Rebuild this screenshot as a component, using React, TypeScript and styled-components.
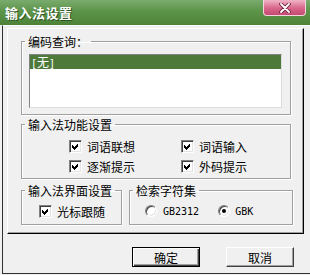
import React from 'react';
import styled, { createGlobalStyle, css } from 'styled-components';

const GlobalStyle = createGlobalStyle`
  html, body {
    margin: 0;
    padding: 0;
    background: #f0f0f0;
  }
  body {
    font-family: "Noto Sans CJK SC", "Noto Sans", sans-serif;
    font-size: 12px;
    color: #000;
  }
  * {
    box-sizing: border-box;
  }
`;

// Window chrome
const Window = styled.div`
  width: 310px;
  height: 275px;
  display: flex;
  flex-direction: column;
  background: #f0f0f0;
  overflow: hidden;
`;

const TitleBar = styled.div`
  height: 25px;
  flex: none;
  display: flex;
  justify-content: space-between;
  align-items: flex-start;
  padding-left: 5px;
  background: linear-gradient(#7aab6e, #5c9449 45%, #4c8339);
`;

const Title = styled.span`
  line-height: 26px;
  font-size: 13px;
  font-weight: bold;
  letter-spacing: 0.5px;
  color: #fff;
  text-shadow: 1px 1px 0 #2f5224;
`;

const CloseButton = styled.div`
  width: 43px;
  height: 16px;
  margin-right: 4px;
  display: flex;
  align-items: center;
  justify-content: center;
  border: 1px solid #f4d4de;
  border-top: none;
  border-radius: 0 0 4px 4px;
  background: linear-gradient(#f0b4c6, #d8658a 55%, #c44a72);
`;

const Body = styled.div`
  flex: 1;
  display: flex;
  flex-direction: column;
  margin: 0 0 1px 2px;
  padding: 2px 6px 0 4px;
  border-top: 1px solid #fff;
  border-left: 1px solid #303030;
  border-bottom: 1px solid #303030;
`;

const Panel = styled.div`
  display: flex;
  flex-direction: column;
  padding: 6px 12px 8px 13px;
  border: 1px solid;
  border-color: #fff #000 #000 #fff;
  box-shadow: inset -1px -1px 0 #a0a0a0;
`;

// Group boxes
const Group = styled.fieldset<{ $width?: number; $top?: number }>`
  margin: ${({ $top }) => $top || 0}px 0 0 0;
  padding: 0;
  min-width: 0;
  border: 1px solid #a0a0a0;
  box-shadow: inset 1px 1px 0 #fff, 1px 1px 0 #fff;
  ${({ $width }) =>
    $width
      ? css`
          width: ${$width}px;
          flex: none;
        `
      : css`
          flex: 1;
        `}
`;

const Caption = styled.legend`
  margin-left: 3px;
  padding: 0 3px;
  line-height: 13px;
  font-size: 12px;
`;

const GroupRow = styled.div`
  display: flex;
  gap: 7px;
  margin-top: 5px;
  margin-right: -2px;
`;

// List
const ListWrap = styled.div`
  padding: 6px 8px 6px 7px;
`;

const ListBox = styled.div`
  height: 54px;
  background: #fff;
  border: 1px solid;
  border-color: #828282 #dcdcdc #dcdcdc #828282;
`;

const ListItem = styled.div<{ $selected?: boolean }>`
  height: 14px;
  line-height: 14px;
  padding-left: 1px;
  background: ${({ $selected }) => ($selected ? '#4d7a3a' : 'transparent')};
  color: ${({ $selected }) => ($selected ? '#fff' : '#000')};
`;

// Options
const OptionGrid = styled.div`
  display: grid;
  grid-template-columns: 112px 112px;
  row-gap: 4px;
  padding: 7px 0 4px 47px;
`;

const OptionLine = styled.div<{ $left: number }>`
  display: flex;
  padding: 6px 0 5px ${({ $left }) => $left}px;
`;

const Option = styled.label<{ $gap?: number; $after?: number }>`
  display: flex;
  align-items: center;
  gap: ${({ $gap }) => $gap || 5}px;
  height: 16px;
  margin-right: ${({ $after }) => $after || 0}px;
  white-space: nowrap;
`;

const Box = styled.span`
  width: 13px;
  height: 13px;
  flex: none;
  display: flex;
  background: #fff;
  border: 1px solid;
  border-color: #808080 #fff #fff #808080;
  box-shadow: inset 1px 1px 0 #404040, inset -1px -1px 0 #e3e3e3;
`;

const Radio = styled.span<{ $checked?: boolean }>`
  width: 12px;
  height: 12px;
  flex: none;
  display: flex;
  align-items: center;
  justify-content: center;
  border-radius: 50%;
  background: #fff;
  border: 1px solid;
  border-color: #808080 #fff #fff #808080;
  box-shadow: inset 1px 1px 0 #404040, inset -1px -1px 0 #e3e3e3;

  &::after {
    content: "";
    width: 4px;
    height: 4px;
    border-radius: 50%;
    background: ${({ $checked }) => ($checked ? '#000' : 'transparent')};
  }
`;

// half-width latin, like the bitmap font of the original
const Latin = styled.span`
  font-family: "DejaVu Sans Mono", "Liberation Mono", monospace;
  font-size: 10px;
`;

// Buttons
const Footer = styled.div`
  display: flex;
  justify-content: flex-end;
  gap: 26px;
  padding: 13px 10px 0 0;
`;

const Button = styled.button<{ $default?: boolean }>`
  width: 68px;
  height: 20px;
  padding: 0;
  font: inherit;
  font-size: 12px;
  color: #000;
  background: #f0f0f0;
  border: 1px solid;
  ${({ $default }) =>
    $default
      ? css`
          border-color: #000;
          box-shadow: inset 1px 1px 0 #fff, inset -1px -1px 0 #404040, inset -2px -2px 0 #a0a0a0;
        `
      : css`
          border-color: #fff #404040 #404040 #fff;
          box-shadow: inset -1px -1px 0 #a0a0a0;
        `}
`;

const Check = () => (
  <svg width="11" height="11" viewBox="0 0 11 11" shapeRendering="crispEdges">
    <polygon points="2,4 4,6 8,2 8,5 4,9 2,7" fill="#000" />
  </svg>
);

const CloseGlyph = () => (
  <svg width="12" height="10" viewBox="0 0 12 10">
    <path d="M2 1 L10 9 M10 1 L2 9" stroke="#6e1f3c" strokeWidth="3.6" strokeLinecap="round" />
    <path d="M2 1 L10 9 M10 1 L2 9" stroke="#fff" strokeWidth="1.8" strokeLinecap="round" />
  </svg>
);

const features = ['词语联想', '词语输入', '逐渐提示', '外码提示'];

const App = () => {
  return (
    <Window>
      <GlobalStyle />
      <TitleBar>
        <Title>输入法设置</Title>
        <CloseButton>
          <CloseGlyph />
        </CloseButton>
      </TitleBar>
      <Body>
        <Panel>
          <Group>
            <Caption>编码查询：</Caption>
            <ListWrap>
              <ListBox>
                <ListItem $selected>
                  <Latin>[</Latin>无<Latin>]</Latin>
                </ListItem>
              </ListBox>
            </ListWrap>
          </Group>

          <Group $top={3}>
            <Caption>输入法功能设置</Caption>
            <OptionGrid>
              {features.map((f) => (
                <Option key={f}>
                  <Box>
                    <Check />
                  </Box>
                  {f}
                </Option>
              ))}
            </OptionGrid>
          </Group>

          <GroupRow>
            <Group $width={101}>
              <Caption>输入法界面设置</Caption>
              <OptionLine $left={17}>
                <Option>
                  <Box>
                    <Check />
                  </Box>
                  光标跟随
                </Option>
              </OptionLine>
            </Group>
            <Group>
              <Caption>检索字符集</Caption>
              <OptionLine $left={15}>
                <Option $gap={6} $after={19}>
                  <Radio />
                  <Latin>GB2312</Latin>
                </Option>
                <Option $gap={5}>
                  <Radio $checked />
                  <Latin>GBK</Latin>
                </Option>
              </OptionLine>
            </Group>
          </GroupRow>
        </Panel>

        <Footer>
          <Button $default>确定</Button>
          <Button>取消</Button>
        </Footer>
      </Body>
    </Window>
  );
};

export default App;
